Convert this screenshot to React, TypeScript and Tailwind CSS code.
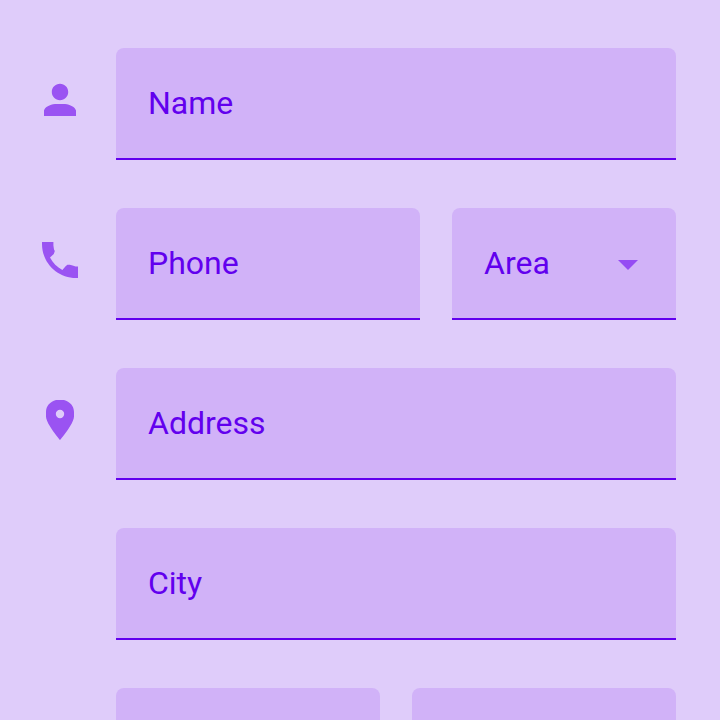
import React from "react";

const fieldBox =
  "h-28 w-full min-w-0 appearance-none rounded-t-lg rounded-b-none border-b-2 border-[#6200ee] bg-[#d1b2f8] px-8 text-[32px] leading-10 text-[#6200ee] outline-none placeholder:text-[#6200ee] placeholder:opacity-100";

function Field({ label }: { label: string }) {
  return <input type="text" aria-label={label} placeholder={label} className={fieldBox} />;
}

function RowIcon({ path }: { path?: string }) {
  return (
    <div className="flex h-26 w-12 shrink-0 items-center justify-center">
      {path && (
        <svg viewBox="0 0 24 24" className="size-12 fill-[#9a53f2]" aria-hidden="true">
          <path fillRule="evenodd" d={path} />
        </svg>
      )}
    </div>
  );
}

function Row({ icon, children }: { icon?: string; children: React.ReactNode }) {
  return (
    <div className="flex gap-8">
      <RowIcon path={icon} />
      <div className="flex min-w-0 flex-1 gap-8">{children}</div>
    </div>
  );
}

const person =
  "M12 12.1c2.3 0 4.1-1.8 4.1-4.1S14.300 3.900 12 3.900 7.900 5.700 7.900 8s1.800 4.100 4.100 4.100zM9.500 14h5c2.700.4 5 1.500 5.500 3.200V20H4v-2.800c.5-1.700 2.800-2.800 5.500-3.200z";
const phone =
  "M3 3h5.700v1.800l.3 1.900.4.8-.5 1.500-1.900 1.800c1.400 2.700 3.500 4.800 6.200 6.200l1.600-1.900.9-.7h1.200l1.400.4 1.500.5H21V21h-1C10.600 21 3 13.400 3 4z";
const place =
  "M10 2h4c2.900.7 5 3.100 5 6v2.200c0 1.200-.8 3-1.900 4.800C15.200 18.300 12 22 12 22s-3.200-3.700-5.100-7C5.800 13.200 5 11.400 5 10.200V8c0-2.900 2.100-5.300 5-6zM12 11.100a2.100 2.100 0 1 0 0-4.200 2.100 2.100 0 0 0 0 4.200z";

export default function App() {
  return (
    <form className="flex h-screen flex-col gap-12 overflow-hidden bg-[#dfccfa] pt-12 pr-11 pl-9 font-[Roboto,sans-serif]">
      <Row icon={person}>
        <Field label="Name" />
      </Row>
      <Row icon={phone}>
        <Field label="Phone" />
        <div className="relative w-56 shrink-0">
          <select aria-label="Area" className={fieldBox}>
            <option>Area</option>
          </select>
          <svg
            viewBox="0 0 24 24"
            className="pointer-events-none absolute top-8 right-6 size-12 fill-[#954bf3]"
            aria-hidden="true"
          >
            <path d="M7 10l5 5 5-5z" />
          </svg>
        </div>
      </Row>
      <Row icon={place}>
        <Field label="Address" />
      </Row>
      <Row>
        <Field label="City" />
      </Row>
      <Row>
        <Field label="State" />
        <Field label="Zip" />
      </Row>
    </form>
  );
}
